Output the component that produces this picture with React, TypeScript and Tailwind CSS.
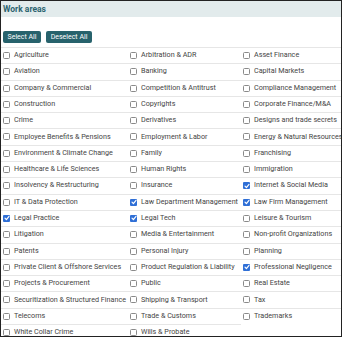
const items: [string, boolean][] = [
  ["Agriculture", false], ["Arbitration & ADR", false], ["Asset Finance", false],
  ["Aviation", false], ["Banking", false], ["Capital Markets", false],
  ["Company & Commercial", false], ["Competition & Antitrust", false], ["Compliance Management", false],
  ["Construction", false], ["Copyrights", false], ["Corporate Finance/M&A", false],
  ["Crime", false], ["Derivatives", false], ["Designs and trade secrets", false],
  ["Employee Benefits & Pensions", false], ["Employment & Labor", false], ["Energy & Natural Resources", false],
  ["Environment & Climate Change", false], ["Family", false], ["Franchising", false],
  ["Healthcare & Life Sciences", false], ["Human Rights", false], ["Immigration", false],
  ["Insolvency & Restructuring", false], ["Insurance", false], ["Internet & Social Media", true],
  ["IT & Data Protection", false], ["Law Department Management", true], ["Law Firm Management", true],
  ["Legal Practice", true], ["Legal Tech", true], ["Leisure & Tourism", false],
  ["Litigation", false], ["Media & Entertainment", false], ["Non-profit Organizations", false],
  ["Patents", false], ["Personal Injury", false], ["Planning", false],
  ["Private Client & Offshore Services", false], ["Product Regulation & Liability", false], ["Professional Negligence", true],
  ["Projects & Procurement", false], ["Public", false], ["Real Estate", false],
  ["Securitization & Structured Finance", false], ["Shipping & Transport", false], ["Tax", false],
  ["Telecoms", false], ["Trade & Customs", false], ["Trademarks", false],
  ["White Collar Crime", false], ["Wills & Probate", false],
];

function Box({ checked }: { checked: boolean }) {
  if (checked) {
    return (
      <span className="w-[7px] h-[7px] rounded-[1px] bg-[#2f6fd6] flex items-center justify-center shrink-0">
        <svg width="6" height="6" viewBox="0 0 6 6" fill="none">
          <path d="M1 3.2 L2.4 4.6 L5 1.4" stroke="white" strokeWidth="1.2" strokeLinecap="round" strokeLinejoin="round" />
        </svg>
      </span>
    );
  }
  return <span className="w-[7px] h-[7px] rounded-[1.5px] border border-[#8a8a8a] bg-white shrink-0" />;
}

export default function App() {
  return (
    <div className="w-[342px] h-[337px] bg-white border border-[#222] overflow-hidden antialiased" style={{ fontFamily: "Roboto, sans-serif" }}>
      <div className="h-[16px] bg-[#e2ebec] flex items-center px-[2px]">
        <span className="text-[8.5px] font-bold text-[#2c6470]">Work areas</span>
      </div>
      <div className="flex gap-[5px] px-[2px] pt-[14px] pb-[4px]">
        <button className="h-[12px] w-[38px] rounded-[2px] bg-[#27626c] text-white text-[7px] leading-none">Select All</button>
        <button className="h-[12px] w-[46px] rounded-[2px] bg-[#27626c] text-white text-[7px] leading-none">Deselect All</button>
      </div>
      <div className="grid grid-cols-[127px_113px_1fr] auto-rows-[16px] gap-y-[0.3px]">
        {items.map(([label, checked]) => (
          <div key={label} className="border-t border-[#e6e6e6] flex items-center gap-[4px] pl-[2px] text-[7.2px] text-[#444] whitespace-nowrap">
            <Box checked={checked} />
            <span>{label}</span>
          </div>
        ))}
      </div>
    </div>
  );
}
